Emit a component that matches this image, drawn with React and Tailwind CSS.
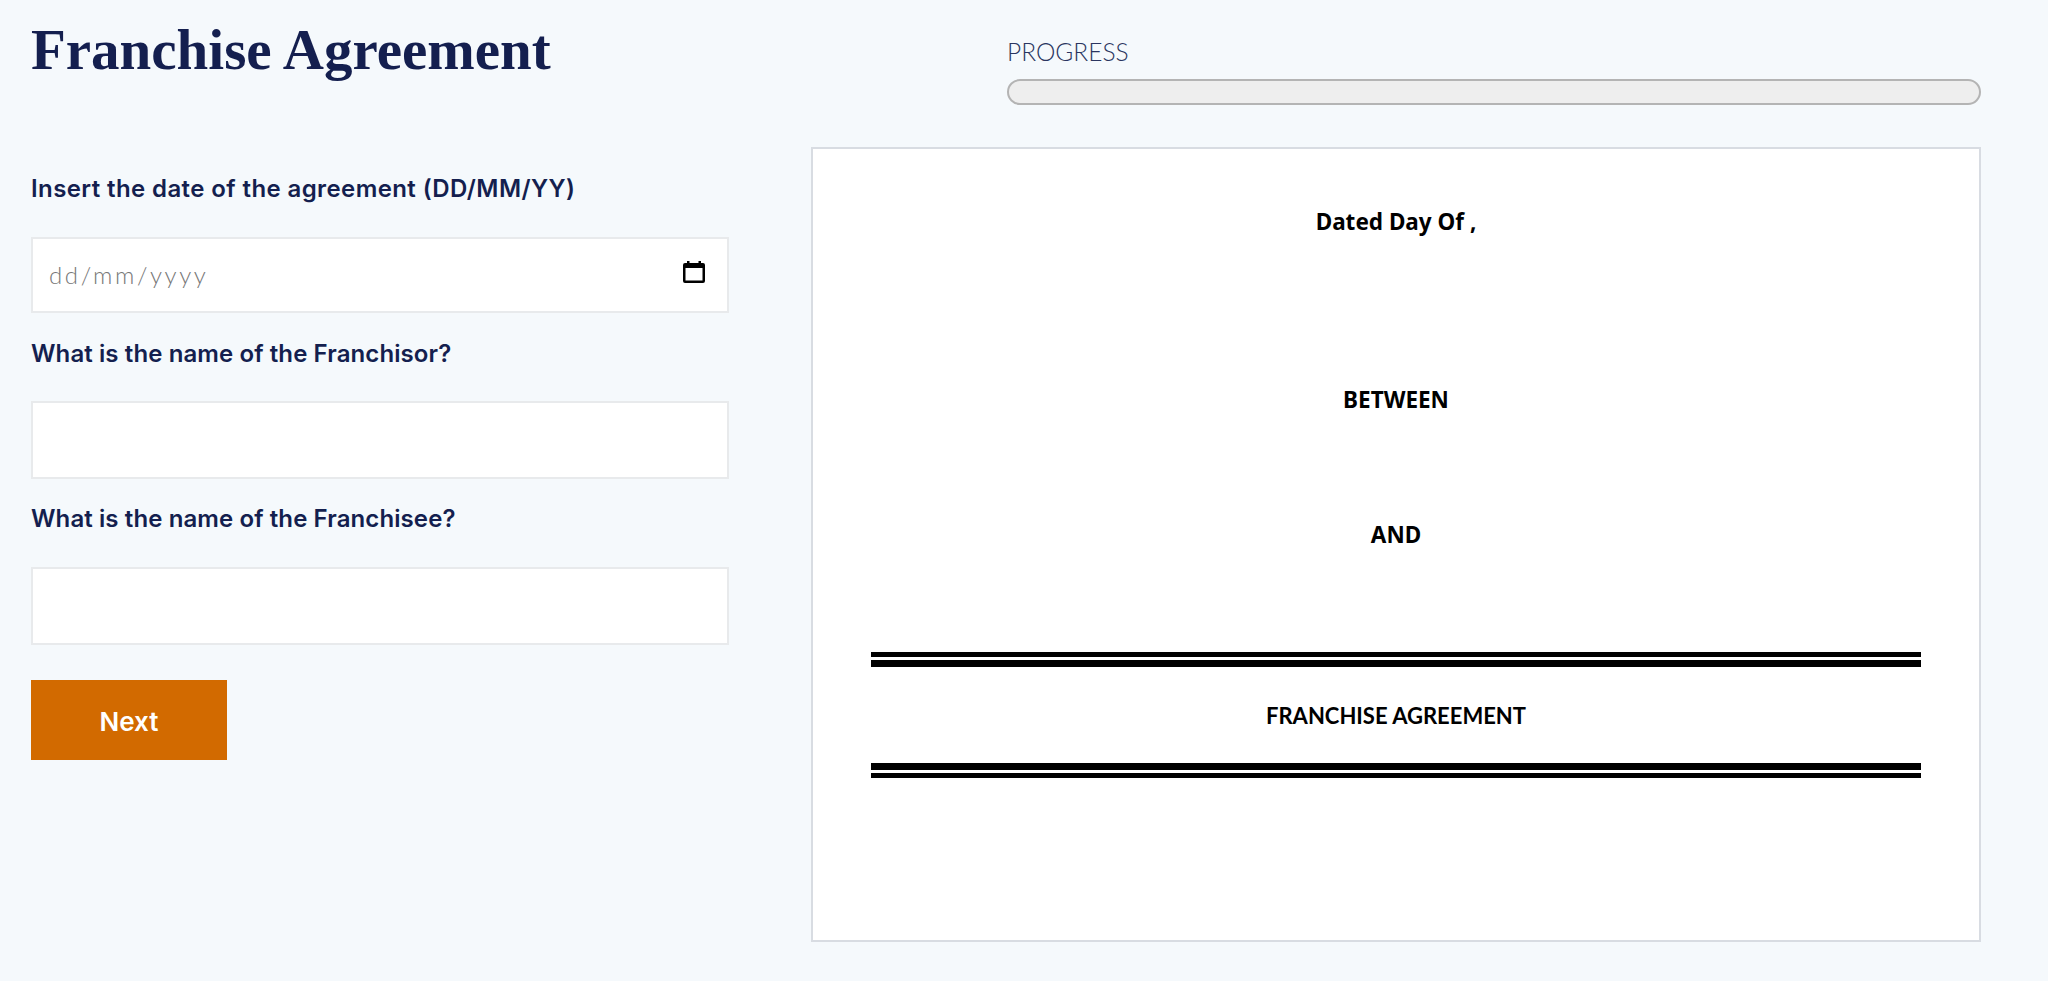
import React from "react";

const LABEL = "text-[24px] leading-[30px] font-semibold text-[#141f4f] font-['Inter','Lato',sans-serif]";
const FIELD = "block w-full bg-white border-2 border-[#e8eaec] outline-none";
const DOC_TEXT = "text-[22.5px] leading-[26px] font-['Noto_Sans',sans-serif]";

function CalendarIcon() {
  return (
    <svg width="22" height="22" viewBox="0 0 22 22" className="shrink-0 mb-[6px]">
      <path d="M4 0h2.5v2h9V0H18v2h2a2 2 0 0 1 2 2v16a2 2 0 0 1-2 2H2a2 2 0 0 1-2-2V4a2 2 0 0 1 2-2h2z M2.5 7v12.5h17V7z" fill="#000" fillRule="evenodd" />
    </svg>
  );
}

function Rules({ flip }) {
  return (
    <div className={`flex gap-[3px] ${flip ? "flex-col-reverse" : "flex-col"}`}>
      <div className="h-[5px] bg-black" />
      <div className="h-[7px] bg-black" />
    </div>
  );
}

export default function App() {
  return (
    <div className="w-[2048px] h-[981px] overflow-hidden bg-[#f5f9fc] flex">
      {/* Left: form */}
      <div className="w-[811px] shrink-0 pl-[31px] pt-[16px]">
        <h1 className="text-[57px] leading-[68px] font-bold text-[#141f4f] font-['Liberation_Serif',serif]">
          Franchise Agreement
        </h1>

        <form className="w-[698px] mt-[90px]">
          <label className={`block tracking-[0.4px] ${LABEL}`}>Insert the date of the agreement (DD/MM/YY)</label>
          <div className={`${FIELD} mt-[33px] h-[76px] flex items-center justify-between pl-[16px] pr-[22px]`}>
            <span className="text-[24px] text-[#777777] tracking-[2.6px] font-light font-['Lato',sans-serif]">dd/mm/yyyy</span>
            <CalendarIcon />
          </div>

          <label className={`block mt-[26px] tracking-[0.1px] ${LABEL}`}>What is the name of the Franchisor?</label>
          <input type="text" className={`${FIELD} mt-[32px] h-[78px]`} />

          <label className={`block mt-[25px] tracking-[0.1px] ${LABEL}`}>What is the name of the Franchisee?</label>
          <input type="text" className={`${FIELD} mt-[33px] h-[78px]`} />

          <button type="button" className="mt-[35px] w-[196px] h-[80px] pt-[3px] bg-[#d26a00] text-white text-[26px] font-semibold font-['Inter',sans-serif]">
            Next
          </button>
        </form>
      </div>

      {/* Right: progress and preview */}
      <div className="w-[1170px] shrink-0 pt-[39px]">
        <div className="ml-[196px]">
          <div className="text-[24.5px] leading-[26px] font-light text-[#2a3560] font-['Lato',sans-serif]">PROGRESS</div>
          <div className="mt-[14px] h-[26px] rounded-full bg-[#eeeeee] border-2 border-[#b4b4b4]" />
        </div>

        <div className="mt-[42px] h-[795px] bg-white border-2 border-[#d8dce2] px-[58px] text-black text-center font-bold">
          <p className={`mt-[60px] ${DOC_TEXT}`}>Dated Day Of ,</p>
          <p className={`mt-[152px] ${DOC_TEXT}`}>BETWEEN</p>
          <p className={`mt-[109px] ${DOC_TEXT}`}>AND</p>
          <div className="mt-[104px]">
            <Rules />
          </div>
          <p className="mt-[36px] text-[22px] leading-[26px] font-['Lato',sans-serif]">FRANCHISE AGREEMENT</p>
          <div className="mt-[34px]">
            <Rules flip />
          </div>
        </div>
      </div>
    </div>
  );
}
